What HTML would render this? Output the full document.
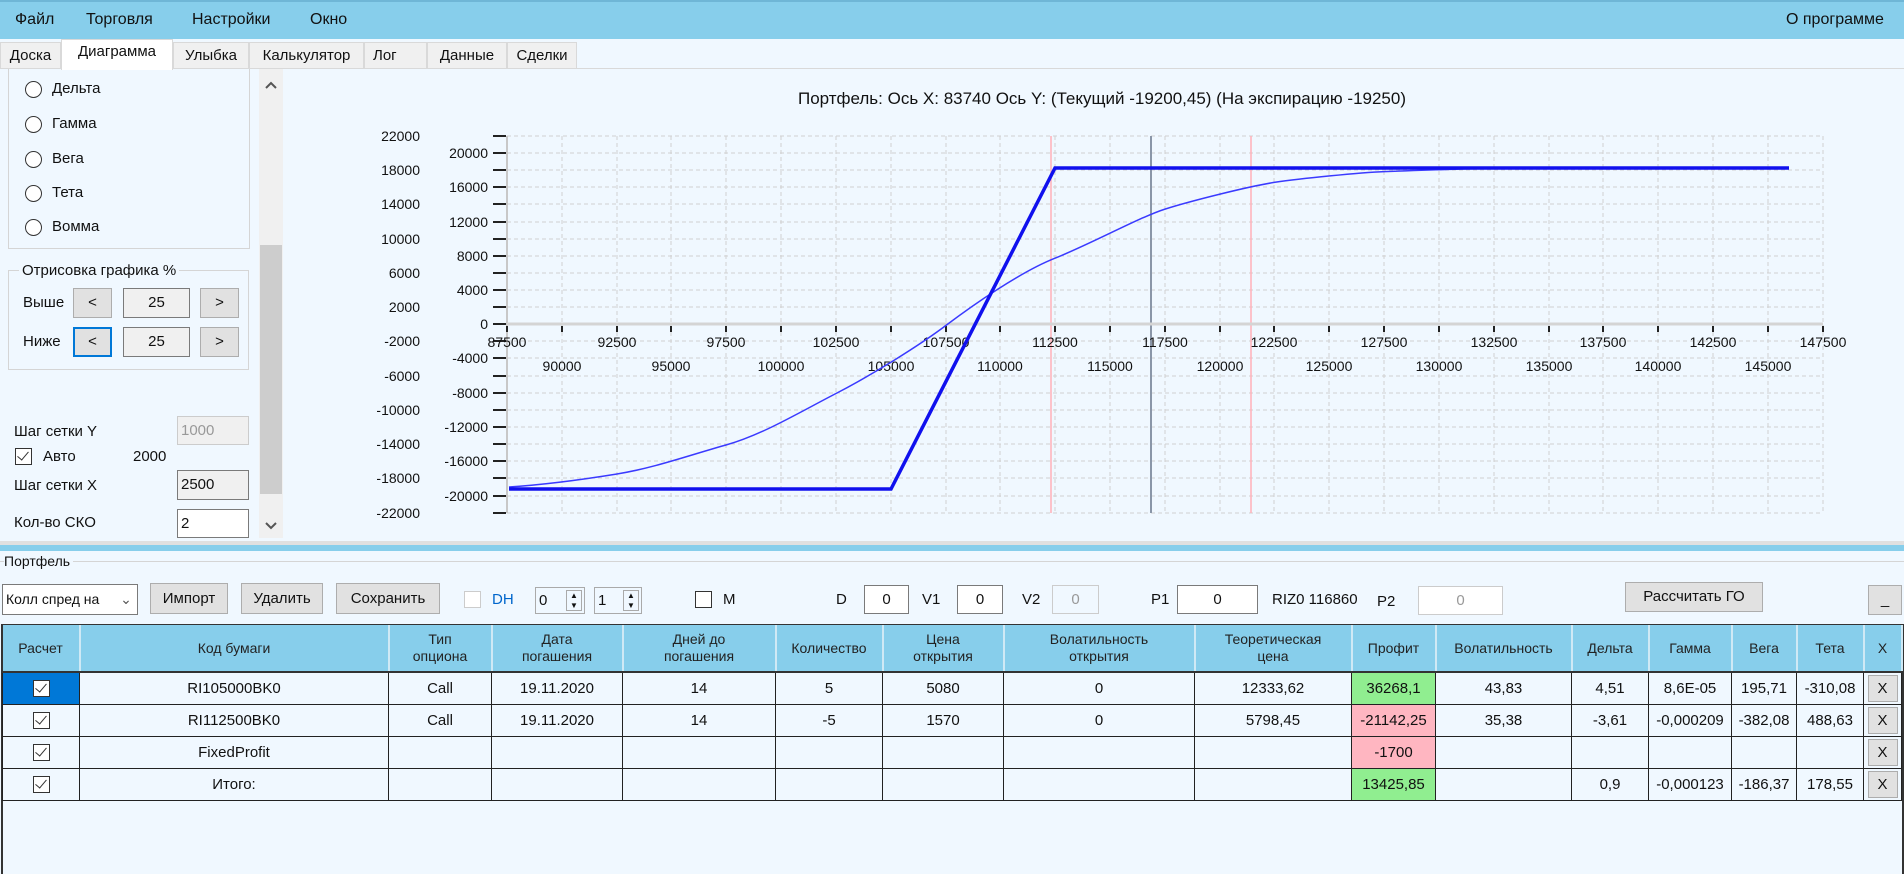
<!DOCTYPE html>
<html><head><meta charset="utf-8">
<style>
*{box-sizing:border-box;margin:0;padding:0}
body{width:1904px;height:874px;overflow:hidden;background:#f0f8ff;font-family:"Liberation Sans","Noto Sans CJK JP",sans-serif;color:#111;position:relative;font-size:15px}
.a{position:absolute;white-space:nowrap}
.menu{left:0;top:0;width:1904px;height:39px;background:#87ceeb;border-top:2px solid #6fb6d6}
.mi{position:absolute;top:9px;font-size:16px}
.tab{position:absolute;top:42px;height:27px;background:#f0f0f0;border:1px solid #d9d9d9;font-size:15px;padding-top:4px;text-align:center}
.btn{position:absolute;background:#e1e1e1;border:1px solid #adadad;text-align:center;font-size:15px}
.tb{position:absolute;background:#fff;border:1px solid #7a7a7a;font-size:15px}
.rad{position:absolute;width:17px;height:17px;border:1.5px solid #333;border-radius:50%;background:#fff}
.chk{position:absolute;width:17px;height:17px;border:1.5px solid #333;background:#fff}
.chk::after{content:"";position:absolute;left:4px;top:0px;width:5px;height:10px;border:solid #333;border-width:0 1.5px 1.5px 0;transform:rotate(40deg)}
table{border-collapse:collapse;table-layout:fixed;position:absolute;left:2px;top:625px;width:1900px}
th{background:#87ceeb;font-weight:normal;font-size:14px;height:47px;border-right:2px solid #cfe9f5;border-bottom:2px solid #333;line-height:17px;color:#222}
td{background:#f0f8ff;border:1.5px solid #222;height:32px;text-align:center;font-size:15px;padding:0}
td .chk{position:relative;display:inline-block;vertical-align:middle}
.xb{display:inline-block;width:30px;height:27px;background:#e1e1e1;border:1px solid #adadad;line-height:25px}
</style></head><body>
<div class="a menu">
<span class="mi" style="left:15px">Файл</span>
<span class="mi" style="left:86px">Торговля</span>
<span class="mi" style="left:192px">Настройки</span>
<span class="mi" style="left:310px">Окно</span>
<span class="mi" style="left:1786px">О программе</span>
</div>
<div class="a" style="left:0;top:68px;width:1904px;height:1px;background:#d9d9d9"></div>
<div class="tab" style="left:0;width:61px">Доска</div>
<div class="tab" style="left:61px;width:112px;top:39px;height:31px;background:#fff;border-bottom:none;padding-top:3px">Диаграмма</div>
<div class="tab" style="left:173px;width:76px">Улыбка</div>
<div class="tab" style="left:249px;width:115px">Калькулятор</div>
<div class="tab" style="left:364px;width:63px;text-align:left;padding-left:8px">Лог</div>
<div class="tab" style="left:427px;width:80px">Данные</div>
<div class="tab" style="left:507px;width:70px">Сделки</div>

<!-- left panel -->
<div class="a" style="left:8px;top:69px;width:242px;height:180px;border:1px solid #d5d5d5;border-top:none"></div>
<div class="rad" style="left:25px;top:81px"></div><span class="a" style="left:52px;top:80px">Дельта</span>
<div class="rad" style="left:25px;top:116px"></div><span class="a" style="left:52px;top:115px">Гамма</span>
<div class="rad" style="left:25px;top:151px"></div><span class="a" style="left:52px;top:150px">Вега</span>
<div class="rad" style="left:25px;top:185px"></div><span class="a" style="left:52px;top:184px">Тета</span>
<div class="rad" style="left:25px;top:219px"></div><span class="a" style="left:52px;top:218px">Вомма</span>
<div class="a" style="left:259px;top:69px;width:24px;height:469px;background:#f0f0f0"></div>
<div class="a" style="left:260px;top:245px;width:22px;height:249px;background:#cdcdcd"></div>
<svg class="a" style="left:263px;top:80px" width="16" height="10"><path d="M3 8L8 3L13 8" fill="none" stroke="#555" stroke-width="2"/></svg>
<svg class="a" style="left:263px;top:521px" width="16" height="10"><path d="M3 2L8 7L13 2" fill="none" stroke="#555" stroke-width="2"/></svg>
<div class="a" style="left:8px;top:270px;width:241px;height:100px;border:1px solid #d5d5d5"></div>
<span class="a" style="left:19px;top:262px;background:#f0f8ff;padding:0 3px;font-size:15px">Отрисовка графика %</span>
<span class="a" style="left:23px;top:294px">Выше</span>
<div class="btn" style="left:73px;top:288px;width:39px;height:30px;line-height:28px">&lt;</div>
<div class="btn" style="left:123px;top:288px;width:67px;height:30px;line-height:28px;background:#f0f0f0;border-color:#7a7a7a">25</div>
<div class="btn" style="left:200px;top:288px;width:39px;height:30px;line-height:28px">&gt;</div>
<span class="a" style="left:23px;top:333px">Ниже</span>
<div class="btn" style="left:73px;top:327px;width:39px;height:30px;line-height:26px;border:2px solid #0078d7">&lt;</div>
<div class="btn" style="left:123px;top:327px;width:67px;height:30px;line-height:28px;background:#f0f0f0;border-color:#7a7a7a">25</div>
<div class="btn" style="left:200px;top:327px;width:39px;height:30px;line-height:28px">&gt;</div>
<span class="a" style="left:14px;top:423px">Шаг сетки Y</span>
<div class="tb" style="left:177px;top:416px;width:72px;height:29px;background:#f0f0f0;border-color:#ccc;color:#999;padding:5px 3px">1000</div>
<div class="chk" style="left:15px;top:448px"></div>
<span class="a" style="left:43px;top:448px">Авто</span>
<span class="a" style="left:133px;top:448px">2000</span>
<span class="a" style="left:14px;top:477px">Шаг сетки X</span>
<div class="tb" style="left:177px;top:470px;width:72px;height:30px;background:#f0f0f0;padding:5px 3px">2500</div>
<span class="a" style="left:14px;top:514px">Кол-во СКО</span>
<div class="tb" style="left:177px;top:509px;width:72px;height:29px;padding:5px 3px">2</div>

<!-- chart -->
<svg class="a" style="left:0;top:0" width="1904" height="545" xmlns="http://www.w3.org/2000/svg" font-family="Liberation Sans, sans-serif" font-size="14">
<text x="1102" y="104" text-anchor="middle" font-size="17" fill="#111">Портфель: Ось X: 83740 Ось Y:  (Текущий -19200,45)  (На экспирацию -19250)</text>
<g stroke="#d0d0d0" stroke-dasharray="4,3" stroke-width="1">
<path d="M562 136V513M617 136V513M671 136V513M726 136V513M781 136V513M836 136V513M891 136V513M946 136V513M1000 136V513M1055 136V513M1110 136V513M1165 136V513M1220 136V513M1274 136V513M1329 136V513M1384 136V513M1439 136V513M1494 136V513M1549 136V513M1603 136V513M1658 136V513M1713 136V513M1768 136V513M1823 136V513"/>
<path d="M507 136H1823M507 153H1823M507 170H1823M507 187H1823M507 204H1823M507 222H1823M507 239H1823M507 256H1823M507 273H1823M507 290H1823M507 307H1823M507 341H1823M507 358H1823M507 376H1823M507 393H1823M507 410H1823M507 427H1823M507 444H1823M507 461H1823M507 478H1823M507 496H1823M507 513H1823"/>
</g>
<path d="M1051 136V513M1251 136V513" stroke="#ffb0b8" stroke-width="1.5"/>
<path d="M1151 136V513" stroke="#8a96a8" stroke-width="2"/>
<path d="M507 136V513" stroke="#c8c8c8" stroke-width="2"/>
<path d="M507 324H1823" stroke="#d4d4d4" stroke-width="3"/>
<g stroke="#222" stroke-width="2">
<path d="M493 136h13M493 153h13M493 170h13M493 187h13M493 204h13M493 222h13M493 239h13M493 256h13M493 273h13M493 290h13M493 307h13M493 324h13M493 341h13M493 358h13M493 376h13M493 393h13M493 410h13M493 427h13M493 444h13M493 461h13M493 478h13M493 496h13M493 513h13"/>
<path d="M507 326v6M562 326v6M617 326v6M671 326v6M726 326v6M781 326v6M836 326v6M891 326v6M946 326v6M1000 326v6M1055 326v6M1110 326v6M1165 326v6M1220 326v6M1274 326v6M1329 326v6M1384 326v6M1439 326v6M1494 326v6M1549 326v6M1603 326v6M1658 326v6M1713 326v6M1768 326v6M1823 326v6"/>
</g>
<g fill="#111" text-anchor="end">
<text x="420" y="141">22000</text><text x="420" y="175">18000</text><text x="420" y="209">14000</text><text x="420" y="244">10000</text><text x="420" y="278">6000</text><text x="420" y="312">2000</text><text x="420" y="346">-2000</text><text x="420" y="381">-6000</text><text x="420" y="415">-10000</text><text x="420" y="449">-14000</text><text x="420" y="483">-18000</text><text x="420" y="518">-22000</text>
<text x="488" y="158">20000</text><text x="488" y="192">16000</text><text x="488" y="227">12000</text><text x="488" y="261">8000</text><text x="488" y="295">4000</text><text x="488" y="329">0</text><text x="488" y="363">-4000</text><text x="488" y="398">-8000</text><text x="488" y="432">-12000</text><text x="488" y="466">-16000</text><text x="488" y="501">-20000</text>
</g>
<g fill="#111" text-anchor="middle">
<text x="507" y="347">87500</text><text x="617" y="347">92500</text><text x="726" y="347">97500</text><text x="836" y="347">102500</text><text x="946" y="347">107500</text><text x="1055" y="347">112500</text><text x="1165" y="347">117500</text><text x="1274" y="347">122500</text><text x="1384" y="347">127500</text><text x="1494" y="347">132500</text><text x="1603" y="347">137500</text><text x="1713" y="347">142500</text><text x="1823" y="347">147500</text>
<text x="562" y="371">90000</text><text x="671" y="371">95000</text><text x="781" y="371">100000</text><text x="891" y="371">105000</text><text x="1000" y="371">110000</text><text x="1110" y="371">115000</text><text x="1220" y="371">120000</text><text x="1329" y="371">125000</text><text x="1439" y="371">130000</text><text x="1549" y="371">135000</text><text x="1658" y="371">140000</text><text x="1768" y="371">145000</text>
</g>
<path fill="none" stroke="#3a3aff" stroke-width="1.5" d="M509 487 C540 485 580 480 617 474 S690 455 726 445 S800 412 836 393.5 S920 345 946 325.4 S1020 272 1055 258.2 S1140 217 1165 209.1 S1250 186 1275 182.3 S1360 172.5 1384 171.6 S1470 168.6 1494 168.5 L1603 167.7"/>
<polyline fill="none" stroke="#1010ee" stroke-width="3.5" points="509,489 891,489 1055,168 1789,168"/>
</svg>

<!-- portfolio -->
<div class="a" style="left:0;top:541px;width:1904px;height:4px;background:#e0e0e0"></div>
<div class="a" style="left:0;top:545px;width:1904px;height:6px;background:#87ceeb"></div>
<div class="a" style="left:0;top:561px;width:1904px;height:1px;background:#d5d5d5"></div>
<span class="a" style="left:4px;top:553px;background:#f0f8ff;padding-right:3px;font-size:14px">Портфель</span>
<div class="tb" style="left:2px;top:584px;width:136px;height:31px;padding:6px 3px;overflow:hidden;font-size:14px">Колл спред на<span style="position:absolute;right:0;top:0;width:22px;height:29px;background:#fff;text-align:center;color:#555;line-height:28px">&#8964;</span></div>
<div class="btn" style="left:150px;top:583px;width:78px;height:31px;line-height:29px">Импорт</div>
<div class="btn" style="left:241px;top:583px;width:82px;height:31px;line-height:29px">Удалить</div>
<div class="btn" style="left:336px;top:583px;width:104px;height:31px;line-height:29px">Сохранить</div>
<div class="a" style="left:464px;top:591px;width:17px;height:17px;border:1px solid #ccc;background:#fff"></div>
<span class="a" style="left:492px;top:591px;color:#0066cc">DH</span>
<div class="tb" style="left:535px;top:587px;width:50px;height:27px;padding:4px 3px;background:#f0f8ff;border-color:#aaa">0<span style="position:absolute;right:2px;top:2px;width:16px;height:21px;border:1px solid #aaa;font-size:8px;line-height:10px;text-align:center">▲<br>▼</span></div>
<div class="tb" style="left:594px;top:587px;width:48px;height:27px;padding:4px 3px;background:#f0f8ff;border-color:#aaa">1<span style="position:absolute;right:2px;top:2px;width:16px;height:21px;border:1px solid #aaa;font-size:8px;line-height:10px;text-align:center">▲<br>▼</span></div>
<div class="a" style="left:695px;top:591px;width:17px;height:17px;border:1.5px solid #333;background:#fff"></div>
<span class="a" style="left:723px;top:591px">M</span>
<span class="a" style="left:836px;top:591px">D</span>
<div class="tb" style="left:864px;top:585px;width:45px;height:29px;text-align:center;padding-top:5px">0</div>
<span class="a" style="left:922px;top:591px">V1</span>
<div class="tb" style="left:957px;top:585px;width:46px;height:29px;text-align:center;padding-top:5px">0</div>
<span class="a" style="left:1022px;top:591px">V2</span>
<div class="tb" style="left:1052px;top:585px;width:47px;height:29px;text-align:center;padding-top:5px;border-color:#ccc;color:#999;background:#f0f8ff">0</div>
<span class="a" style="left:1151px;top:591px">P1</span>
<div class="tb" style="left:1177px;top:585px;width:81px;height:29px;text-align:center;padding-top:5px">0</div>
<span class="a" style="left:1272px;top:591px">RIZ0 116860</span>
<span class="a" style="left:1377px;top:593px">P2</span>
<div class="tb" style="left:1418px;top:586px;width:85px;height:29px;text-align:center;padding-top:5px;border-color:#ccc;color:#999;background:#fff">0</div>
<div class="btn" style="left:1625px;top:582px;width:138px;height:30px;line-height:28px">Рассчитать ГО</div>
<div class="btn" style="left:1868px;top:585px;width:34px;height:30px;line-height:28px">_</div>

<div class="a" style="left:1px;top:624px;width:1903px;height:250px;border:2px solid #333;border-bottom:none;background:#f0f8ff"></div>
<table>
<colgroup><col style="width:77px"><col style="width:309px"><col style="width:103px"><col style="width:131px"><col style="width:153px"><col style="width:107px"><col style="width:121px"><col style="width:191px"><col style="width:157px"><col style="width:84px"><col style="width:136px"><col style="width:77px"><col style="width:83px"><col style="width:65px"><col style="width:67px"><col style="width:38px"></colgroup>
<tr><th>Расчет</th><th>Код бумаги</th><th>Тип<br>опциона</th><th>Дата<br>погашения</th><th>Дней до<br>погашения</th><th>Количество</th><th>Цена<br>открытия</th><th>Волатильность<br>открытия</th><th>Теоретическая<br>цена</th><th>Профит</th><th>Волатильность</th><th>Дельта</th><th>Гамма</th><th>Вега</th><th>Тета</th><th>X</th></tr>
<tr><td style="background:#0078d7"><span class="chk"></span></td><td>RI105000BK0</td><td>Call</td><td>19.11.2020</td><td>14</td><td>5</td><td>5080</td><td>0</td><td>12333,62</td><td style="background:#90ee90">36268,1</td><td>43,83</td><td>4,51</td><td>8,6E-05</td><td>195,71</td><td>-310,08</td><td><span class="xb">X</span></td></tr>
<tr><td><span class="chk"></span></td><td>RI112500BK0</td><td>Call</td><td>19.11.2020</td><td>14</td><td>-5</td><td>1570</td><td>0</td><td>5798,45</td><td style="background:#ffb6c1">-21142,25</td><td>35,38</td><td>-3,61</td><td>-0,000209</td><td>-382,08</td><td>488,63</td><td><span class="xb">X</span></td></tr>
<tr><td><span class="chk"></span></td><td>FixedProfit</td><td></td><td></td><td></td><td></td><td></td><td></td><td></td><td style="background:#ffb6c1">-1700</td><td></td><td></td><td></td><td></td><td></td><td><span class="xb">X</span></td></tr>
<tr><td><span class="chk"></span></td><td>Итого:</td><td></td><td></td><td></td><td></td><td></td><td></td><td></td><td style="background:#90ee90">13425,85</td><td></td><td>0,9</td><td>-0,000123</td><td>-186,37</td><td>178,55</td><td><span class="xb">X</span></td></tr>
</table>
</body></html>
